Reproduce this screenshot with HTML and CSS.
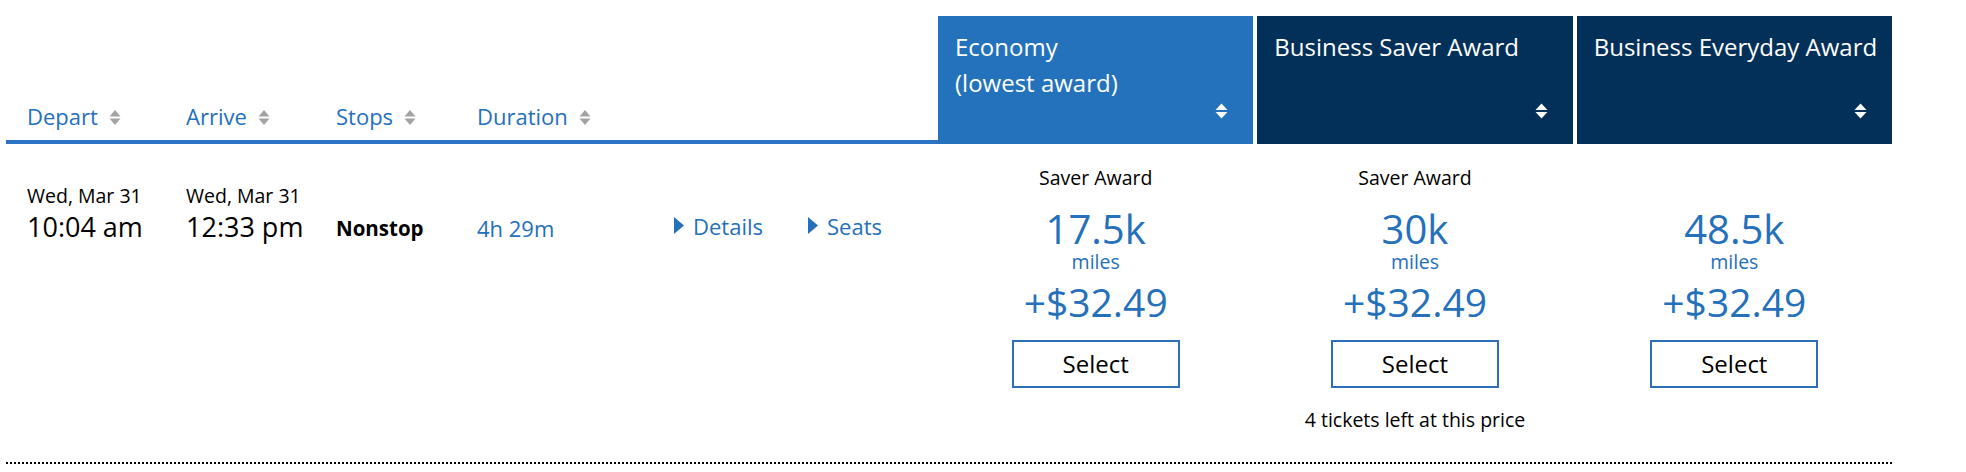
FILE: index.html
```html
<!DOCTYPE html>
<html lang="en">
<head>
<meta charset="utf-8">
<title>Flight results</title>
<link rel="stylesheet" href="styles.css">
</head>
<body>
<div class="results">
  <div class="head">
    <div class="head-left">
      <div class="sort-label">Depart<svg class="sort-ic" width="12" height="17" viewBox="0 0 12 17"><polygon points="0.5,7.5 6,1 11.5,7.5"/><polygon points="0.5,9.5 6,16 11.5,9.5"/></svg></div>
      <div class="sort-label">Arrive<svg class="sort-ic" width="12" height="17" viewBox="0 0 12 17"><polygon points="0.5,7.5 6,1 11.5,7.5"/><polygon points="0.5,9.5 6,16 11.5,9.5"/></svg></div>
      <div class="sort-label">Stops<svg class="sort-ic" width="12" height="17" viewBox="0 0 12 17"><polygon points="0.5,7.5 6,1 11.5,7.5"/><polygon points="0.5,9.5 6,16 11.5,9.5"/></svg></div>
      <div class="sort-label">Duration<svg class="sort-ic" width="12" height="17" viewBox="0 0 12 17"><polygon points="0.5,7.5 6,1 11.5,7.5"/><polygon points="0.5,9.5 6,16 11.5,9.5"/></svg></div>
    </div>
    <div class="head-fares">
      <div class="fare-h fare-h-eco">
        <div class="fare-title">Economy<br>(lowest award)</div>
        <svg class="fare-sort" width="13" height="16" viewBox="0 0 13 16"><polygon points="0.5,7 6.5,0.5 12.5,7"/><polygon points="0.5,9 6.5,15.5 12.5,9"/></svg>
      </div>
      <div class="fare-h fare-h-dark">
        <div class="fare-title">Business Saver Award</div>
        <svg class="fare-sort" width="13" height="16" viewBox="0 0 13 16"><polygon points="0.5,7 6.5,0.5 12.5,7"/><polygon points="0.5,9 6.5,15.5 12.5,9"/></svg>
      </div>
      <div class="fare-h fare-h-dark">
        <div class="fare-title">Business Everyday Award</div>
        <svg class="fare-sort" width="13" height="16" viewBox="0 0 13 16"><polygon points="0.5,7 6.5,0.5 12.5,7"/><polygon points="0.5,9 6.5,15.5 12.5,9"/></svg>
      </div>
    </div>
  </div>

  <div class="row">
    <div class="row-left">
      <div class="when">
        <div class="date">Wed, Mar 31</div>
        <div class="time">10:04 am</div>
      </div>
      <div class="when">
        <div class="date">Wed, Mar 31</div>
        <div class="time">12:33 pm</div>
      </div>
      <div class="stops">Nonstop</div>
      <div class="duration">4h 29m</div>
      <div class="link"><svg class="tri" width="10" height="17" viewBox="0 0 10 17"><polygon points="0,0 10,8.5 0,17"/></svg>Details</div>
      <div class="link"><svg class="tri" width="10" height="17" viewBox="0 0 10 17"><polygon points="0,0 10,8.5 0,17"/></svg>Seats</div>
    </div>
    <div class="row-fares">
      <div class="fare">
        <div class="fare-type">Saver Award</div>
        <div class="miles">17.5k</div>
        <div class="miles-unit">miles</div>
        <div class="tax">+$32.49</div>
        <button class="select">Select</button>
      </div>
      <div class="fare">
        <div class="fare-type">Saver Award</div>
        <div class="miles">30k</div>
        <div class="miles-unit">miles</div>
        <div class="tax">+$32.49</div>
        <button class="select">Select</button>
        <div class="left-note">4 tickets left at this price</div>
      </div>
      <div class="fare">
        <div class="fare-type"></div>
        <div class="miles">48.5k</div>
        <div class="miles-unit">miles</div>
        <div class="tax">+$32.49</div>
        <button class="select">Select</button>
      </div>
    </div>
  </div>
</div>
</body>
</html>
```

FILE: styles.css
```css
html, body {
  margin: 0;
  padding: 0;
  background: #fff;
}

body {
  font-family: "Open Sans", "DejaVu Sans", sans-serif;
  color: #000;
}

.results {
  margin: 16px 0 0 6px;
  width: 1886px;
}

/* ---------- header ---------- */
.head {
  display: flex;
  height: 128px;
}

.head-left {
  width: 932px;
  box-sizing: border-box;
  border-bottom: 4px solid #2a72c4;
  padding: 0 0 9.5px 21px;
  display: grid;
  grid-template-columns: 159px 150px 141px 197px 1fr;
  align-items: end;
}

.sort-label {
  font-size: 22px;
  line-height: normal;
  color: #2470bb;
  white-space: nowrap;
}

.sort-ic {
  margin-left: 11px;
  vertical-align: -1px;
  fill: #a3a3a3;
}

.head-fares {
  width: 954px;
  display: grid;
  grid-template-columns: repeat(3, 1fr);
  column-gap: 4px;
}

.fare-h {
  box-sizing: border-box;
  height: 128px;
  padding: 13px 6px 25px 17px;
  display: flex;
  flex-direction: column;
  color: #fff;
  font-size: 24px;
  line-height: 36px;
}

.fare-title {
  white-space: nowrap;
}

.fare-h-eco {
  background: #2472bb;
}

.fare-h-dark {
  background: #023059;
}

.fare-sort {
  margin-top: auto;
  margin-right: 19px;
  align-self: flex-end;
  fill: #fff;
}

/* ---------- row ---------- */
.row {
  display: flex;
  height: 318px;
  border-bottom: 2px dotted #000;
}

.row-left {
  width: 932px;
  box-sizing: border-box;
  padding-left: 21px;
  display: grid;
  grid-template-columns: 159px 150px 141px 197px 134px 1fr;
  align-items: start;
}

.when {
  margin-top: 38.7px;
}

.date {
  font-size: 19.5px;
  line-height: 26px;
}

.time {
  font-size: 27px;
  line-height: 36px;
}

.stops {
  margin-top: 70px;
  font-size: 20.5px;
  font-weight: 700;
  line-height: 28px;
}

.duration {
  margin-top: 68.5px;
  font-size: 22px;
  line-height: 30px;
  color: #2470bb;
}

.link {
  margin-top: 66.5px;
  font-size: 22px;
  line-height: 30px;
  color: #2470bb;
  white-space: nowrap;
}

.tri {
  fill: #2470bb;
  margin-right: 9px;
  vertical-align: 1px;
}

.row-fares {
  width: 954px;
  display: grid;
  grid-template-columns: repeat(3, 1fr);
  column-gap: 4px;
  text-align: center;
}

.fare {
  padding-top: 21px;
}

.fare-type {
  font-size: 19.5px;
  line-height: 26px;
  min-height: 26px;
}

.miles {
  margin-top: 15.5px;
  font-size: 40px;
  line-height: 44px;
  color: #2470bb;
}

.miles-unit {
  font-size: 19.5px;
  line-height: 22px;
  color: #2470bb;
}

.tax {
  margin-top: 9.5px;
  font-size: 39px;
  line-height: 40px;
  color: #2470bb;
}

.select {
  display: block;
  margin: 18px auto 0;
  width: 168px;
  height: 48px;
  box-sizing: border-box;
  padding: 0;
  border: 2px solid #2a6fba;
  background: #fff;
  color: #000;
  font-family: "Open Sans", "DejaVu Sans", sans-serif;
  font-size: 24px;
  line-height: 44px;
}

.left-note {
  margin-top: 18.7px;
  font-size: 19.5px;
  line-height: 26px;
}
```
